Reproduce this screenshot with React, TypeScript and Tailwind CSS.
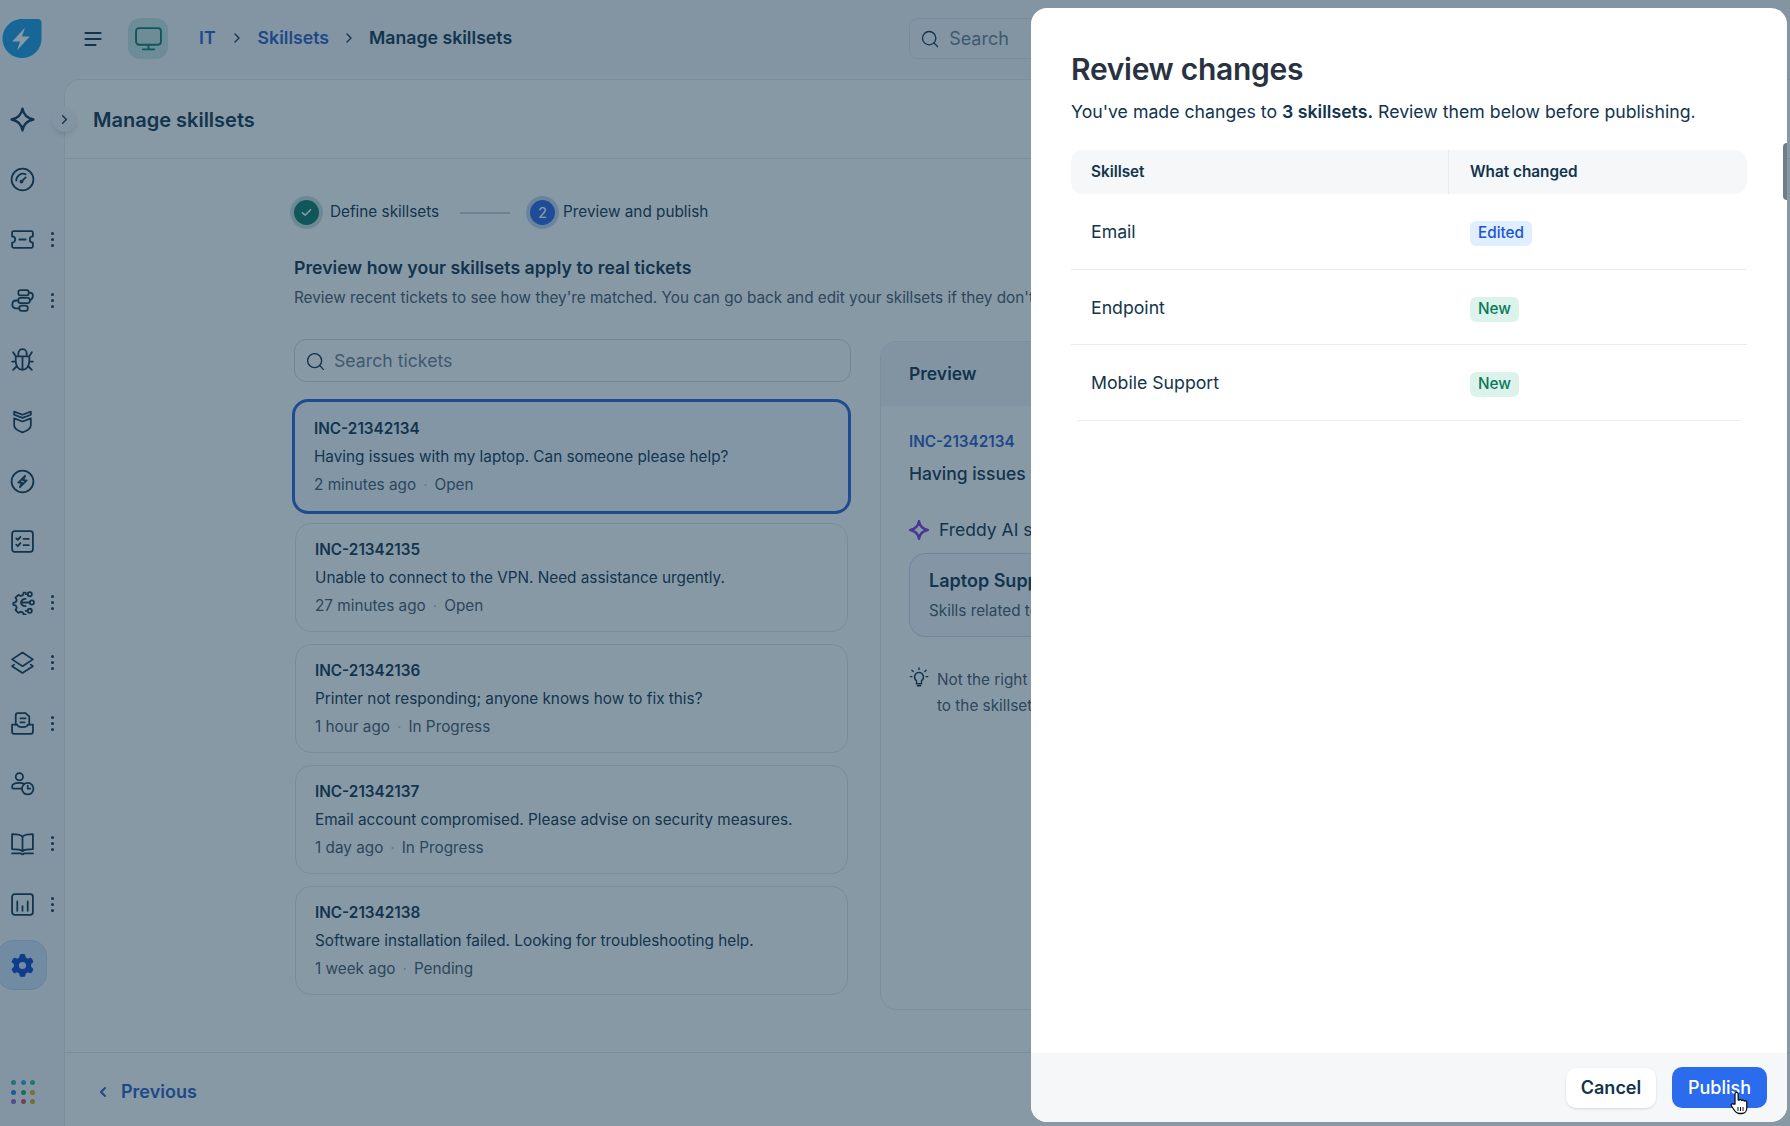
import type { ReactNode } from 'react';
import { ChevronLeft, ChevronRight, Search } from 'lucide-react';
import { FaGear } from 'react-icons/fa6';

const font = { fontFamily: 'Inter, "Noto Sans", sans-serif' };

function Icon({ children, className = '' }: { children: ReactNode; className?: string }) {
  return (
    <svg
      viewBox="0 0 24 24"
      fill="none"
      stroke="currentColor"
      strokeWidth="1.7"
      strokeLinecap="round"
      strokeLinejoin="round"
      className={`w-[25px] h-[25px] ${className}`}
    >
      {children}
    </svg>
  );
}

const SPARK = 'M12 1.500c1 6 4 9.300 10.500 10.500-6.500 1.200-9.500 4.500-10.500 10.500-1-6-4-9.300-10.500-10.500C8 10.800 11 7.500 12 1.500z';

const sideItems: { icon: ReactNode; more?: boolean }[] = [
  { icon: <Icon className="stroke-[2.200px]"><path d={SPARK} /></Icon> },
  {
    icon: (
      <Icon>
        <circle cx="12" cy="12" r="10.500" />
        <path d="M6 13a6.500 6.500 0 0 1 9-6M11 14l4-4" />
        <circle cx="11" cy="14" r="1" />
      </Icon>
    ),
  },
  {
    more: true,
    icon: (
      <Icon>
        <path d="M3.500 4h17A1.500 1.500 0 0 1 22 5.500V9a3 3 0 0 0 0 6v3.500a1.500 1.500 0 0 1-1.500 1.500h-17A1.500 1.500 0 0 1 2 18.500V15a3 3 0 0 0 0-6V5.500A1.500 1.500 0 0 1 3.500 4zM9 12h6" />
      </Icon>
    ),
  },
  {
    more: true,
    icon: (
      <Icon>
        <rect x="8" y="2" width="10" height="5" rx="2" />
        <rect x="8" y="9.500" width="11" height="5" rx="2" />
        <rect x="9" y="17" width="8" height="5" rx="2" />
        <path d="M18 4.500h1a3 3 0 0 1 3 3c0 2-1 3.500-3 4.500M8 12H6c-5 0-5 7.500 0 7.500h3" />
      </Icon>
    ),
  },
  {
    icon: (
      <Icon>
        <path d="M8 7V5a4 4 0 0 1 8 0v2M5.500 8h13v5a6.500 8 0 0 1-13 0zM12 8v13M5.500 8 3 4M18.500 8 21 4M5 13H2M19 13h3M6 18l-3 3M18 18l3 3" />
      </Icon>
    ),
  },
  {
    icon: (
      <Icon>
        <path d="M4 2.500l8 3 8-3v3l-8 3-8-3zM4 9l8 3 8-3v6.500c0 3-4 5.500-8 7-4-1.500-8-4-8-7z" />
      </Icon>
    ),
  },
  {
    icon: (
      <Icon>
        <circle cx="12" cy="12" r="10.500" />
        <path d="M14.500 6.500 8 13h3.500l-2 4.500L16 11h-3.500z" />
      </Icon>
    ),
  },
  {
    icon: (
      <Icon>
        <rect x="2" y="2" width="20" height="20" rx="2.500" />
        <path d="M6 9l1.500 1.500L10 7.500M6 15l1.500 1.500L10 13.500M13 9.500h5M13 15.500h5" />
      </Icon>
    ),
  },
  {
    more: true,
    icon: (
      <Icon>
        <path d="M15 2.500h-2l-.6 2.400-2.200.9-2.100-1.200-2.800 2.800 1.200 2.100-.9 2.200-2.400.6v2l2.400.6.9 2.200-1.200 2.100 2.800 2.800 2.100-1.200 2.200.9.600 1.700H15" />
        <path d="M15 8.500a4 4 0 0 0-4.500 3.500A4 4 0 0 0 15 15.500M11 12h8M15 4h2M15 20h2" />
        <circle cx="19" cy="4" r="2" />
        <circle cx="21" cy="12" r="2" />
        <circle cx="19" cy="20" r="2" />
      </Icon>
    ),
  },
  {
    more: true,
    icon: (
      <Icon>
        <path d="M12 2.500 22 9l-10 6.500L2 9zM4 14l-2 1.500L12 22l10-6.500L20 14" />
      </Icon>
    ),
  },
  {
    more: true,
    icon: (
      <Icon>
        <path d="M5.500 13V4a2 2 0 0 1 2-2H15l3.500 3.500V13M10 7h5M10 11h4" />
        <path d="M2 13h5c0 2 1.500 2.500 5 2.500S17 15 17 13h5v7a2 2 0 0 1-2 2H4a2 2 0 0 1-2-2z" />
      </Icon>
    ),
  },
  {
    icon: (
      <Icon>
        <circle cx="9" cy="5.500" r="3.500" />
        <path d="M11.500 17H4a2 2 0 0 1-2-2c0-2.500 3-3.500 7-3.500 1.500 0 3 .2 4.200.6" />
        <circle cx="17" cy="17" r="5.500" />
        <path d="M17 14v3h2.500" />
      </Icon>
    ),
  },
  {
    more: true,
    icon: (
      <Icon>
        <path d="M12 5.500C10.500 3.500 8 3 2 3v14.500c6 0 8.500.5 10 2 1.500-1.500 4-2 10-2V3c-6 0-8.500.5-10 2.500zM12 5.500v14M2 21.500h8.500l1.500 1 1.500-1H22" />
      </Icon>
    ),
  },
  {
    more: true,
    icon: (
      <Icon>
        <rect x="2" y="2" width="20" height="20" rx="2.500" />
        <path d="M7 9v9M12 13.500V18M17 9v9" />
      </Icon>
    ),
  },
];

const tickets = [
  { id: 'INC-21342134', text: 'Having issues with my laptop. Can someone please help?', time: '2 minutes ago', status: 'Open', selected: true },
  { id: 'INC-21342135', text: 'Unable to connect to the VPN. Need assistance urgently.', time: '27 minutes ago', status: 'Open' },
  { id: 'INC-21342136', text: 'Printer not responding; anyone knows how to fix this?', time: '1 hour ago', status: 'In Progress' },
  { id: 'INC-21342137', text: 'Email account compromised. Please advise on security measures.', time: '1 day ago', status: 'In Progress' },
  { id: 'INC-21342138', text: 'Software installation failed. Looking for troubleshooting help.', time: '1 week ago', status: 'Pending' },
];

const changes = [
  { name: 'Email', badge: 'Edited' },
  { name: 'Endpoint', badge: 'New' },
  { name: 'Mobile Support', badge: 'New' },
];

const appDots = ['#2fb5a0', '#2aa9d8', '#38b77f', '#2b7fd4', '#22a46f', '#e0a92b', '#9a5bd0', '#d94a55', '#d9a52b'];

function MoreDots() {
  return (
    <span className="flex flex-col gap-[3px]">
      <span className="w-[3px] h-[3px] rounded-full bg-[#12344d]" />
      <span className="w-[3px] h-[3px] rounded-full bg-[#12344d]" />
      <span className="w-[3px] h-[3px] rounded-full bg-[#12344d]" />
    </span>
  );
}

function Sidebar() {
  return (
    <aside className="w-[64px] shrink-0 flex flex-col text-[#12344d]">
      <div className="h-[10px]" />
      {sideItems.map((item, i) => (
        <div key={i} className="h-[60.400px] flex items-center pl-[10px] gap-[16px]">
          {item.icon}
          {item.more && <MoreDots />}
        </div>
      ))}
      <div className="mt-[6px] h-[50px] w-[50px] -ml-[3px] flex items-center justify-center rounded-2xl bg-[#cfe3f7] border border-[#bcd6f2] text-[#0f47c9]">
        <FaGear className="w-[23px] h-[23px]" />
      </div>
      <div className="mt-auto mb-[22px] pl-[11px] grid grid-cols-3 gap-[4.500px] w-fit">
        {appDots.map((c, i) => (
          <span key={i} className="w-[5px] h-[5px] rounded-full" style={{ backgroundColor: c }} />
        ))}
      </div>
    </aside>
  );
}

function TopBar() {
  return (
    <header className="h-[79px] pb-[2px] shrink-0 flex items-center text-[#12344d]">
      <svg viewBox="0 0 40 42" className="ml-[2px] w-[40px] h-[41px]">
        <path d="M20 1h16a4 4 0 0 1 4 4v16c0 11-9 20-20 20S0 32 0 21 9 1 20 1z" fill="#1a9be0" />
        <path d="M23 10 10 24h8l-3 9 13-14h-8z" fill="#fff" />
      </svg>
      <svg viewBox="0 0 18 16" className="ml-[42px] w-[18px] h-[16px]" fill="none" stroke="currentColor" strokeWidth="2.200" strokeLinecap="round">
        <path d="M1.500 2h15M1.500 8h15M1.500 14h10" />
      </svg>
      <div className="ml-[26px] w-[40px] h-[41px] rounded-xl bg-[#c6e6e2] flex items-center justify-center text-[#0c7a68]">
        <svg viewBox="0 0 26 24" className="w-[27px] h-[25px]" fill="none" stroke="currentColor" strokeWidth="1.800" strokeLinecap="round" strokeLinejoin="round">
          <rect x="1" y="2" width="24" height="16" rx="3" />
          <path d="M13 18v4M7.500 22.500h11" />
        </svg>
      </div>
      <nav className="ml-[31px] flex items-center text-[17.700px] font-semibold">
        <span className="text-[#2c5cc5]">IT</span>
        <ChevronRight className="w-4 h-4 mx-[13px]" />
        <span className="text-[#2c5cc5]">Skillsets</span>
        <ChevronRight className="w-4 h-4 mx-[12px]" />
        <span>Manage skillsets</span>
      </nav>
      <div className="ml-[397px] h-[41px] w-[220px] shrink-0 flex items-center gap-[9px] pl-[10px] rounded-lg border border-[#dde3e8] text-[18px] text-[#6b7f8e]">
        <Search className="w-[20px] h-[20px] text-[#12344d]" strokeWidth={1.6} />
        Search
      </div>
    </header>
  );
}

function Stepper() {
  return (
    <div className="flex items-center text-[15.300px] text-[#12344d]">
      <span className="w-[25px] h-[25px] rounded-full bg-[#0c7a68] ring-[4px] ring-[#c9dedb] flex items-center justify-center">
        <svg viewBox="0 0 12 10" className="w-[11px] h-[9px]" fill="none" stroke="#fff" strokeWidth="1.800" strokeLinecap="round" strokeLinejoin="round">
          <path d="M1.500 5.500 4.500 8l6-6" />
        </svg>
      </span>
      <span className="ml-[11px]">Define skillsets</span>
      <span className="ml-[21px] w-[50px] h-[2px] bg-[#c6d0d8]" />
      <span className="ml-[20px] w-[25px] h-[25px] rounded-full bg-[#2c64e0] ring-[4px] ring-[#c5d4ee] flex items-center justify-center text-white text-[14px] font-medium">
        2
      </span>
      <span className="ml-[8px]">Preview and publish</span>
    </div>
  );
}

function TicketCard({ id, text, time, status, selected }: (typeof tickets)[number]) {
  return (
    <div
      className={`rounded-2xl flex flex-col justify-center text-[15.300px] leading-[28px] text-[#12344d] ${
        selected
          ? 'h-[115px] -mb-[3px] -ml-[3px] -mr-[2.500px] pl-[19px] border-[3px] border-[#2c64d0] bg-[#f5f9ff]'
          : 'h-[109px] pl-[19px] border border-[#dde3e8] bg-white'
      }`}
    >
      <p className="font-semibold">{id}</p>
      <p>{text}</p>
      <p className="text-[#475867]">
        {time}
        <span className="mx-[7px] text-[#b5c2cc]">·</span>
        {status}
      </p>
    </div>
  );
}

function PreviewPanel() {
  return (
    <section className="w-[620px] h-[669px] shrink-0 rounded-2xl border border-[#e4e9ee] overflow-hidden text-[#12344d]">
      <div className="h-[64px] flex items-center px-[28px] bg-[#f3f5f7] text-[17.500px] font-semibold">Preview</div>
      <div className="px-[28px] pt-[25px]">
        <p className="text-[15.300px] font-semibold text-[#2c5cc5]">INC-21342134</p>
        <p className="mt-[7px] text-[17.500px] font-medium">Having issues with my laptop. Can someone please help?</p>
        <div className="mt-[30px] flex items-center gap-[10px] text-[17.500px]">
          <svg viewBox="0 0 24 24" className="w-[20px] h-[20px]" fill="none" stroke="#7c3fd6" strokeWidth="3" strokeLinejoin="round">
            <path d={SPARK} />
          </svg>
          Freddy AI suggested skillset
        </div>
        <div className="mt-[10px] h-[84px] rounded-2xl border border-[#cdd8ef] bg-[#f7f9fe] px-[19px] flex flex-col justify-center">
          <p className="text-[18px] font-semibold">Laptop Support</p>
          <p className="mt-[6px] text-[15.300px] text-[#475867]">Skills related to laptop hardware and software issues</p>
        </div>
        <div className="mt-[30px] flex gap-[8px] text-[15.300px] leading-[26px] text-[#475867]">
          <svg viewBox="0 0 24 24" className="w-[20px] h-[20px] shrink-0 text-[#12344d]" fill="none" stroke="currentColor" strokeWidth="1.700" strokeLinecap="round" strokeLinejoin="round">
            <path d="M12 6.500a5.500 5.500 0 0 0-3 10v3.500h6v-3.500a5.500 5.500 0 0 0-3-10zM10 22.500h4M12 1v2M3.500 4l1.500 1.500M20.500 4 19 5.500M1.500 11.500h2M20.500 11.500h2" />
          </svg>
          <p>
            Not the right skillset? Go back and make changes
            <br />
            to the skillsets you defined.
          </p>
        </div>
      </div>
    </section>
  );
}

function MainCard() {
  return (
    <main className="relative flex-1 min-w-0 flex flex-col rounded-tl-2xl border-l border-t border-[#e4e9ee] bg-white text-[#12344d]">
      <div className="h-[79px] pt-[1px] shrink-0 flex items-center pl-[28px] border-b border-[#e4e9ee] text-[20px] font-semibold">
        Manage skillsets
      </div>
      <span className="absolute left-[-13px] top-[27px] w-[25px] h-[25px] rounded-full bg-[#f5f7f9] shadow-md flex items-center justify-center">
        <ChevronRight className="w-[15px] h-[15px]" strokeWidth={2.200} />
      </span>
      <div className="flex-1 min-h-0 pl-[229px] pt-[41px] overflow-hidden">
        <Stepper />
        <h2 className="mt-[30px] text-[17.700px] font-semibold leading-[26px]">Preview how your skillsets apply to real tickets</h2>
        <p className="mt-[5px] text-[15.300px] leading-[24px] text-[#475867] whitespace-nowrap">
          Review recent tickets to see how they're matched. You can go back and edit your skillsets if they don't look right.
        </p>
        <div className="mt-[29px] flex gap-[29px] items-start">
          <div className="w-[557px] shrink-0">
            <div className="h-[43px] pt-[1px] flex items-center gap-[8px] px-[10px] rounded-xl border border-[#cfd7df] text-[17.700px] text-[#6b7f8e]">
              <Search className="w-[21px] h-[21px] text-[#12344d]" strokeWidth={1.6} />
              Search tickets
            </div>
            <div className="mt-[17px] ml-[1px] mr-[3px] flex flex-col gap-[12px]">
              {tickets.map((t) => (
                <TicketCard key={t.id} {...t} />
              ))}
            </div>
          </div>
          <div className="mt-[2px]">
            <PreviewPanel />
          </div>
        </div>
      </div>
      <div className="h-[74px] pt-[4px] shrink-0 flex items-center gap-[10px] pl-[30px] border-t border-[#dfe5ea] text-[18px] font-semibold text-[#2c5cc5]">
        <ChevronLeft className="w-[16px] h-[16px]" strokeWidth={3} />
        Previous
      </div>
    </main>
  );
}

function ReviewDrawer() {
  return (
    <div className="absolute inset-0 bg-[#12344d]/50 flex justify-end pt-[8px] pr-[3px] pb-[4px]">
      <aside className="relative w-[756px] flex flex-col rounded-2xl bg-white overflow-hidden">
        <div className="flex-1 px-[40px] pt-[39px] text-[#12344d]">
          <h1 className="text-[30px] leading-[44px] font-semibold text-[#283241] -tracking-[0.3px]">Review changes</h1>
          <p className="mt-[7px] text-[17.700px] leading-[28px]">
            You've made changes to <strong className="font-semibold">3 skillsets.</strong> Review them below before publishing.
          </p>
          <div className="mt-[24px] grid grid-cols-[378px_1fr] h-[44px] items-center rounded-xl bg-[#f5f7f9] text-[15.300px] font-semibold">
            <span className="pl-[20px] h-full flex items-center border-r border-[#e8ecef]">Skillset</span>
            <span className="pl-[21px]">What changed</span>
          </div>
          {changes.map((c, i) => (
            <div
              key={c.name}
              className={`grid grid-cols-[378px_1fr] items-center h-[75.500px] pt-[3px] text-[17.700px] border-b ${
                i === 2 ? 'border-[#edf0f3] mx-[6px]' : 'border-[#e8ecef]'
              }`}
            >
              <span className={i === 2 ? 'pl-[14px]' : 'pl-[20px]'}>{c.name}</span>
              <span className={i === 2 ? 'pl-[15px]' : 'pl-[21px]'}>
                <span
                  className={`inline-flex items-center h-[25px] px-[8px] rounded-md text-[15.300px] font-medium ${
                    c.badge === 'Edited' ? 'bg-[#e0efff] text-[#1c54d6]' : 'bg-[#dcf3ec] text-[#0c7a58]'
                  }`}
                >
                  {c.badge}
                </span>
              </span>
            </div>
          ))}
        </div>
        <div className="h-[69px] shrink-0 bg-[#f5f7f9] flex items-center justify-end gap-[16px] pr-[20px]">
          <button type="button" className="h-[40px] w-[90px] rounded-[10px] bg-white shadow-sm text-[18px] font-semibold text-[#12344d]">
            Cancel
          </button>
          <button type="button" className="h-[41px] w-[95px] rounded-[10px] bg-[#2a6ced] text-[18px] font-medium text-white">
            Publish
          </button>
        </div>
        <span className="absolute right-0 top-[135px] w-[4px] h-[57px] rounded-l bg-[#6f7d88]" />
        {/* mouse pointer */}
        <svg viewBox="0 0 20 24" className="absolute right-[38px] bottom-[7px] w-[20px] h-[24px]">
          <path
            d="M6 13V3a1.600 1.600 0 0 1 3.200 0v6l1 .1a1.500 1.500 0 0 1 2.600.4 1.500 1.500 0 0 1 2.500.6 1.500 1.500 0 0 1 2.500 1V17c0 3-2 5.500-5 5.500H10c-2.500 0-3.500-1.500-4.500-3L2.500 15c-1-1.500.8-3 2.200-1.800z"
            fill="#fff"
            stroke="#111"
            strokeWidth="1.300"
            strokeLinejoin="round"
          />
          <path d="M9 16v4M11.500 16v4M14 16v4" stroke="#111" strokeWidth="1" />
        </svg>
      </aside>
    </div>
  );
}

export default function App() {
  return (
    <div className="relative h-screen w-full overflow-hidden bg-[#f5f7f9]" style={font}>
      <div className="h-full flex flex-col">
        <TopBar />
        <div className="flex-1 min-h-0 flex">
          <Sidebar />
          <MainCard />
        </div>
      </div>
      <ReviewDrawer />
    </div>
  );
}
